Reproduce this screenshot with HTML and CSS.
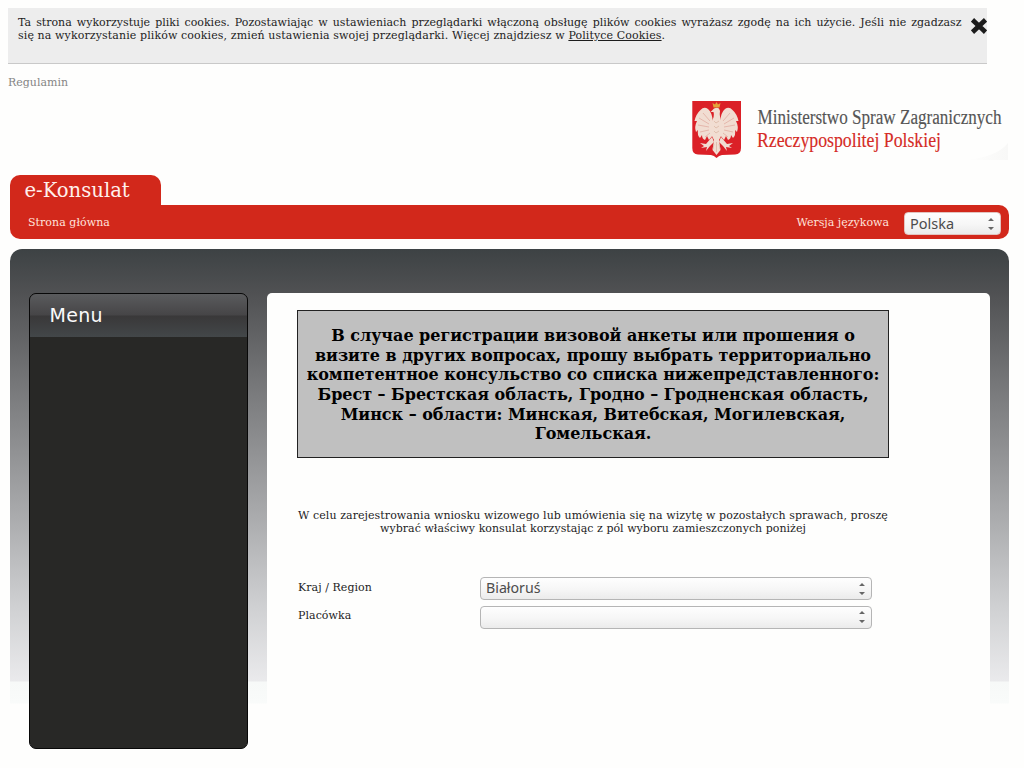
FILE: index.html
```html
<!DOCTYPE html>
<html lang="pl">
<head>
<meta charset="utf-8">
<title>e-Konsulat</title>
<link rel="stylesheet" href="styles.css">
</head>
<body>
<div class="cookies">
  <div class="cookies-text"><p class="spread">Ta strona wykorzystuje pliki cookies. Pozostawiając w ustawieniach przeglądarki włączoną obsługę plików cookies wyrażasz zgodę na ich użycie. Jeśli nie zgadzasz</p><p class="second">się na wykorzystanie plików cookies, zmień ustawienia swojej przeglądarki. Więcej znajdziesz w <a href="#">Polityce Cookies</a>.</p></div>
  <svg class="close" width="16" height="16" viewBox="0 0 16 16"><path d="M3.200 3.500 12.800 12.500M12.800 3.500 3.200 12.500" stroke="#1c1c1c" stroke-width="4.800" stroke-linecap="square"/></svg>
</div>
<a class="rules" href="#">Regulamin</a>
<header class="brand">
  <svg width="318" height="62" viewBox="0 0 318 62">
    <defs><linearGradient id="fade"><stop offset="0" stop-color="#fefefd"/><stop offset="1" stop-color="#f8f8f7"/></linearGradient></defs>
    <path d="M275 61 Q306 58 317 44V61Z" fill="url(#fade)"/>
    <path d="M1.300 2H50V49Q50 55 44 55.500L31 56Q28 56.500 25.500 59Q23 56.500 20 56L7 55.500Q1.300 55 1.300 49Z" fill="#db2027"/>
    <g fill="#f1ddd2">
      <path d="M22 23Q21 13 17 10Q13 7 9.500 11Q5 15 3.500 22L6 22Q3 28 5 33L7 31Q6 36 9 39L11 36Q11 40 14 41L16 37L18 41L22 36Z"/>
      <path d="M29 23Q30 13 34 10Q38 7 41.500 11Q46 15 47.500 22L45 22Q48 28 46 33L44 31Q45 36 42 39L40 36Q40 40 37 41L35 37L33 41L29 36Z"/>
      <path d="M20 24Q24 17 22.500 13L19.500 13L23 9.500Q28 7 29 12Q28 17 31 24V35L28 41L29.500 51L25.500 56L21.500 51L23 41L20 35Z"/>
      <path d="M21 38 15 45 9 44 13 47 10 49 16 48 15 52 19 47 23 43ZM30 38 36 45 42 44 38 47 41 49 35 48 36 52 32 47 28 43Z"/>
    </g>
    <g fill="none" stroke="#e0a69b" stroke-width=".7">
      <path d="M19 22 12 14M18 25 8 19M18 28 7 26M18 31 9 33M19 34 14 38M32 22 39 14M33 25 43 19M33 28 44 26M33 31 42 33M32 34 37 38"/>
      <path d="M23 22 25 24 28 22M23 27 25 29 28 27M23 32 25 34 28 32M23 45 22 50M25.500 43V53M28 45 29 50" stroke="#d9b3a0"/>
    </g>
    <path d="M22.500 8.500 21.500 4 24 5.500 25.500 3 27 5.500 29.500 4 28.500 8.500Z" fill="#e4a33b"/>
    <text class="ministry" x="66.500" y="25" textLength="244" lengthAdjust="spacingAndGlyphs">Ministerstwo Spraw Zagranicznych</text>
    <text class="ministry republic" x="66" y="48" textLength="184" lengthAdjust="spacingAndGlyphs">Rzeczypospolitej Polskiej</text>
  </svg>
</header>
<div class="tab">e-Konsulat</div>
<nav class="bar">
  <a href="#">Strona główna</a>
  <span class="lang">Wersja językowa</span>
  <div class="select small"><span>Polska</span><svg width="8" height="14" viewBox="0 0 8 14"><path d="M1 4 4 1 7 4ZM1 10 4 13 7 10Z" fill="#666"/></svg></div>
</nav>
<div class="stage">
  <aside class="menu"><h2>Menu</h2></aside>
  <main class="panel">
    <div class="notice">В случае регистрации визовой анкеты или прошения о<br>визите в других вопросах, прошу выбрать территориально<br>компетентное консульство со списка нижепредставленного:<br>Брест – Брестская область, Гродно – Гродненская область,<br>Минск – области: Минская, Витебская, Могилевская,<br>Гомельская.</div>
    <p class="intro"><span class="wide">W celu zarejestrowania wniosku wizowego lub umówienia się na wizytę w pozostałych sprawach, proszę</span><br>wybrać właściwy konsulat korzystając z pól wyboru zamieszczonych poniżej</p>
    <div class="row"><label>Kraj / Region</label><div class="select"><span>Białoruś</span><svg width="8" height="14" viewBox="0 0 8 14"><path d="M1 4 4 1 7 4ZM1 10 4 13 7 10Z" fill="#666"/></svg></div></div>
    <div class="row"><label>Placówka</label><div class="select"><span></span><svg width="8" height="14" viewBox="0 0 8 14"><path d="M1 4 4 1 7 4ZM1 10 4 13 7 10Z" fill="#666"/></svg></div></div>
  </main>
</div>
</body>
</html>
```
FILE: styles.css
```css
* { box-sizing: border-box; }
html { background: #fefefd; }
body { margin: 0; padding: 8px 0 0; width: 1024px; height: 768px; overflow: hidden; font: 11px/12.8px "DejaVu Serif", serif; color: #1d1d1d; }
p { margin: 0; }
a { color: inherit; }
.cookies { display: flex; width: 979px; height: 56px; margin-left: 8px; padding: 9px 0 0 10px; background: #ededed; border-bottom: 1px solid #c9c9c9; }
.cookies-text { width: 944.5px; white-space: nowrap; }
.spread { text-align-last: justify; white-space: normal; }
.second { letter-spacing: .11px; }
.close { margin: 1px 0 0 9.5px; flex: none; }
.rules { display: block; margin: 13px 0 0 8px; color: #858585; text-decoration: none; }
.brand { height: 76px; margin: 9px 0 0 691px; }
.brand svg { display: block; overflow: visible; }
.ministry { font: 20px "Liberation Serif", serif; fill: #555; stroke: #555; stroke-width: .15px; }
.republic { fill: #d52b25; stroke: #d52b25; }
.tab { width: 151px; height: 30px; margin-left: 10px; padding: 3px 0 0 14.5px; border-radius: 10px 10px 0 0; background: #d2281b; color: #fff0ed; font-size: 19.6px; line-height: 25px; }
.bar { display: flex; align-items: center; width: 999px; height: 34px; margin-left: 10px; padding: 3px 8px 0 18px; border-radius: 0 10px 10px 10px; background: #d2281b; color: #ffe3dc; }
.bar a { text-decoration: none; letter-spacing: .05px; }
.lang { margin-left: auto; margin-right: 15px; }
.select { display: flex; align-items: center; justify-content: space-between; width: 392px; height: 23px; padding: 0 5px; border: 1px solid #b5b5b5; border-radius: 4px; background: linear-gradient(#fefefe, #f6f6f6 55%, #ebebeb); font: 14.2px/20px "Noto Sans", sans-serif; color: #4c4c4c; }
.select span { margin-top: -1px; }
.small { width: 97px; height: 23px; border-color: #e2c4c0; }
.small span { margin-top: -1px; font-size: 14.5px; }
.small svg { position: relative; top: 1px; }
.stage { display: flex; align-items: flex-start; width: 999px; height: 519px; margin: 10px 0 0 10px; padding: 44px 19px 0; border-radius: 12px 12px 0 0; background: linear-gradient(#3d4244 0, #505153 44px, #7c7d7f 150px, #a9aaac 265px, #d0d1d3 360px, #eaeaec 432px, #f7f9f8 433px, #f9fbfa 454px, transparent 455px); }
.menu { width: 219px; height: 456px; border: 1px solid #080808; border-radius: 7px; background: #282826; overflow: hidden; }
.menu h2 { height: 43px; margin: 0; padding: 9px 0 0 19.5px; background: linear-gradient(#5a5b5d 0, #464547 21px, #393839 22px, #434749 43px); color: #fafafa; font: 19px/24px "DejaVu Sans", sans-serif; letter-spacing: .3px; }
.panel { width: 723px; height: 475px; margin-left: 19px; padding: 17.5px 0 0 30px; background: #fefefd; border-radius: 5px; }
.notice { width: 592px; height: 148px; padding-top: 14.5px; border: 1px solid #222; background: #c0c0c0; color: #000; font-weight: bold; font-size: 16px; letter-spacing: -.03px; line-height: 19.7px; text-align: center; white-space: nowrap; }
.intro { width: 592px; margin: 51.5px 0 42px; text-align: center; white-space: nowrap; letter-spacing: .025px; }
.wide { letter-spacing: .07px; }
.row { display: flex; height: 28.500px; }
.row label { width: 183px; padding: 4.500px 0 0 1px; letter-spacing: .05px; }
```
